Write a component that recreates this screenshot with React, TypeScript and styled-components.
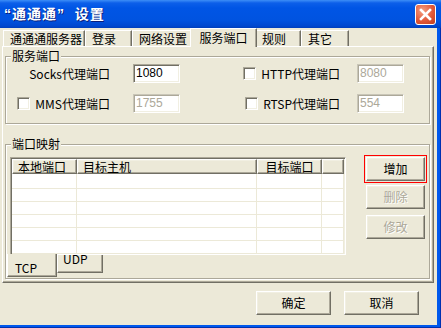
import styled, { createGlobalStyle, css } from "styled-components";

const GlobalStyle = createGlobalStyle`
  * { box-sizing: border-box; }
  html, body { margin: 0; padding: 0; }
  body {
    background: #ece9d8;
    font-family: "Noto Sans CJK SC", "Liberation Sans", sans-serif;
    font-size: 12px;
    line-height: 12px;
    color: #000;
  }
`;

const raised = css`
  border: 1px solid;
  border-color: #fff #716f64 #716f64 #fff;
  box-shadow: inset -1px -1px #aca899, inset 1px 1px #f1efe2;
`;

const sunken = css`
  border: 1px solid;
  border-color: #aca899 #fff #fff #aca899;
  box-shadow: inset 1px 1px #716f64, inset -1px -1px #f1efe2;
`;

const Window = styled.div`
  width: 441px;
  height: 328px;
  display: flex;
  flex-direction: column;
`;

const TitleBar = styled.div`
  height: 28px;
  flex: none;
  display: flex;
  align-items: center;
  justify-content: space-between;
  padding: 0 5px 0 4px;
  background: linear-gradient(
    180deg,
    #3d8ef7 0,
    #0c5fe9 3px,
    #0055e5 8px,
    #0053e0 20px,
    #0048cf 26px,
    #003fbb 28px
  );
`;

const Title = styled.span`
  color: #fff;
  font-family: "Liberation Sans", "Noto Sans CJK SC", sans-serif;
  font-weight: bold;
  font-size: 14px;
  line-height: 14px;
  letter-spacing: 1px;
  text-shadow: 1px 1px #0a1e7a;
  margin-top: -1px;
  white-space: pre;
`;

const CloseButton = styled.div`
  width: 21px;
  height: 21px;
  border: 1px solid #fff;
  border-radius: 3px;
  background: radial-gradient(circle at 35% 30%, #f49f82, #e2593a 55%, #c13d1c);
  display: flex;
  align-items: center;
  justify-content: center;
`;

const Frame = styled.div`
  flex: 1;
  display: flex;
  padding: 0 4px 3px 0;
  background: #0058ec;
  box-shadow: inset -1px -1px #0030b0;
`;

const Client = styled.div`
  flex: 1;
  display: flex;
  flex-direction: column;
  padding: 0 3px 0 2px;
  background: #ece9d8;
`;

const TabRow = styled.div`
  height: 18px;
  flex: none;
  display: flex;
  align-items: flex-end;
  padding-left: 1px;
  position: relative;
  z-index: 1;
`;

const Tab = styled.div<{ $active?: boolean; $w: number }>`
  width: ${(p) => p.$w}px;
  height: ${(p) => (p.$active ? 19 : 16)}px;
  margin: ${(p) => (p.$active ? "0 -2px -1px" : "0")};
  padding: ${(p) => (p.$active ? "3px 0 0" : "2px 0 0 6px")};
  text-align: ${(p) => (p.$active ? "center" : "left")};
  background: #ece9d8;
  border: 1px solid;
  border-bottom: none;
  border-color: #fff #716f64 transparent #fff;
  box-shadow: inset -1px 0 #aca899;
  position: relative;
  z-index: ${(p) => (p.$active ? 2 : 1)};
  white-space: nowrap;
`;

const Panel = styled.div`
  height: 237px;
  flex: none;
  display: flex;
  flex-direction: column;
  padding: 0 3px 0 2px;
  border: 1px solid;
  border-color: #fff #716f64 #716f64 #fff;
  box-shadow: inset -1px -1px #aca899;
`;

const Group = styled.div<{ $mt: number; $pb: number }>`
  margin-top: ${(p) => p.$mt}px;
  padding-bottom: ${(p) => p.$pb}px;
  border: 1px solid #aca899;
  box-shadow: inset 1px 1px #fff, 1px 1px #fff;
  display: flex;
  flex-direction: column;
`;

const Legend = styled.div`
  align-self: flex-start;
  margin: -7px 0 0 5px;
  padding: 0 1px;
  line-height: 12px;
  background: #ece9d8;
  position: relative;
`;

const FieldRow = styled.div<{ $mt: number }>`
  display: flex;
  align-items: center;
  height: 19px;
  margin-top: ${(p) => p.$mt}px;
`;

const LabelCell = styled.div<{ $w: number; $pr: number }>`
  width: ${(p) => p.$w}px;
  padding-right: ${(p) => p.$pr}px;
  display: flex;
  align-items: center;
  justify-content: flex-end;
  white-space: nowrap;
`;

const CheckBox = styled.div`
  width: 13px;
  height: 13px;
  margin-right: 5px;
  background: #fff;
  ${sunken};
`;

const TextBox = styled.div<{ $disabled?: boolean }>`
  width: 47px;
  height: 19px;
  padding: 0 0 0 2px;
  background: #fff;
  ${sunken};
  border-color: ${(p) =>
    p.$disabled ? "#c9c6b8 #fff #fff #c9c6b8" : "#aca899 #fff #fff #aca899"};
  box-shadow: inset 1px 1px ${(p) => (p.$disabled ? "#aca899" : "#716f64")},
    inset -1px -1px #f1efe2;
  color: ${(p) => (p.$disabled ? "#aca899" : "#000")};
  font-family: "Liberation Sans", sans-serif;
  font-size: 12px;
  line-height: 17px;
`;

const MapBody = styled.div`
  display: flex;
  align-items: flex-start;
  padding-left: 4px;
`;

const ListColumn = styled.div`
  width: 336px;
  margin-top: 7px;
  display: flex;
  flex-direction: column;
`;

const ListView = styled.div`
  height: 98px;
  display: flex;
  flex-direction: column;
  overflow: hidden;
  background: #fff;
  border: 1px solid;
  border-color: #aca899 #fff #fff #aca899;
  box-shadow: inset 1px 1px #716f64, inset -1px -1px #f1efe2;
  padding: 1px;
`;

const HeaderRow = styled.div`
  display: flex;
  height: 15px;
  flex: none;
`;

const HeaderCell = styled.div<{ $w?: number; $center?: boolean }>`
  ${(p) => (p.$w ? `width: ${p.$w}px; flex: none;` : "flex: 1;")}
  ${raised};
  background: #ece9d8;
  padding-left: ${(p) => (p.$center ? 0 : 5)}px;
  text-align: ${(p) => (p.$center ? "center" : "left")};
  line-height: 13px;
  white-space: nowrap;
`;

const Row = styled.div<{ $h: number }>`
  display: flex;
  height: ${(p) => p.$h}px;
  flex: none;
`;

const Cell = styled.div<{ $w?: number }>`
  ${(p) => (p.$w ? `width: ${p.$w}px; flex: none;` : "flex: 1;")}
  border-right: 1px solid #ece9d8;
  border-bottom: 1px solid #ece9d8;
`;

const TabStrip = styled.div`
  display: flex;
  align-items: flex-start;
  margin-left: -3px;
`;

const BottomTab = styled.div<{ $active?: boolean }>`
  width: ${(p) => (p.$active ? 50 : 46)}px;
  height: ${(p) => (p.$active ? 23 : 18)}px;
  margin-top: ${(p) => (p.$active ? -1 : 0)}px;
  padding: ${(p) => (p.$active ? "8px 0 0 7px" : "0 0 0 5px")};
  line-height: ${(p) => (p.$active ? 12 : 8)}px;
  background: #ece9d8;
  border: 1px solid;
  border-top: none;
  border-color: transparent #716f64 #716f64 #fff;
  box-shadow: inset -1px -1px #aca899;
  position: relative;
  z-index: ${(p) => (p.$active ? 2 : 1)};
`;

const ButtonColumn = styled.div`
  display: flex;
  flex-direction: column;
  align-items: flex-start;
  margin: 5px 0 0 18px;
`;

const FocusRing = styled.div`
  border: 1px solid #ff0000;
  padding: 1px;
`;

const Button = styled.div<{ $w: number; $disabled?: boolean; $mt?: number; $ml?: number }>`
  width: ${(p) => p.$w}px;
  height: 24px;
  margin: ${(p) => p.$mt ?? 0}px 0 0 ${(p) => p.$ml ?? 0}px;
  display: flex;
  align-items: center;
  justify-content: center;
  background: #ece9d8;
  ${raised};
  color: ${(p) => (p.$disabled ? "#aca899" : "#000")};
  text-shadow: ${(p) => (p.$disabled ? "1px 1px #fff" : "none")};
`;

const ButtonBar = styled.div`
  display: flex;
  justify-content: flex-end;
  gap: 13px;
  margin-top: 8px;
  padding-right: 15px;
`;

const columns = [65, 180, 65, 0];
const rowHeights = [15, 13, 13, 13, 13, 13, 13];

const tabs = [
  { label: "通通通服务器", w: 82 },
  { label: "登录", w: 47 },
  { label: "网络设置", w: 60 },
  { label: "服务端口", w: 67, active: true },
  { label: "规则", w: 46 },
  { label: "其它", w: 48 },
];

export default function App() {
  return (
    <>
      <GlobalStyle />
      <Window>
        <TitleBar>
          <Title>“通通通”  设置</Title>
          <CloseButton>
            <svg width="13" height="13" viewBox="0 0 13 13">
              <path d="M2 2 L11 11 M11 2 L2 11" stroke="#fff" strokeWidth="2.6" strokeLinecap="square" />
            </svg>
          </CloseButton>
        </TitleBar>
        <Frame>
          <Client>
            <TabRow>
              {tabs.map((t) => (
                <Tab key={t.label} $w={t.w} $active={t.active}>
                  {t.label}
                </Tab>
              ))}
            </TabRow>
            <Panel>
              <Group $mt={9} $pb={10}>
                <Legend>服务端口</Legend>
                <FieldRow $mt={2}>
                  <LabelCell $w={127} $pr={23}>Socks代理端口</LabelCell>
                  <TextBox>1080</TextBox>
                  <LabelCell $w={177} $pr={17}>
                    <CheckBox />
                    HTTP代理端口
                  </LabelCell>
                  <TextBox $disabled>8080</TextBox>
                </FieldRow>
                <FieldRow $mt={11}>
                  <LabelCell $w={127} $pr={23}>
                    <CheckBox />
                    MMS代理端口
                  </LabelCell>
                  <TextBox $disabled>1755</TextBox>
                  <LabelCell $w={177} $pr={17}>
                    <CheckBox />
                    RTSP代理端口
                  </LabelCell>
                  <TextBox $disabled>554</TextBox>
                </FieldRow>
              </Group>
              <Group $mt={20} $pb={1}>
                <Legend>端口映射</Legend>
                <MapBody>
                  <ListColumn>
                    <ListView>
                      <HeaderRow>
                        <HeaderCell $w={65}>本地端口</HeaderCell>
                        <HeaderCell $w={180}>目标主机</HeaderCell>
                        <HeaderCell $w={65} $center>目标端口</HeaderCell>
                        <HeaderCell />
                      </HeaderRow>
                      {rowHeights.map((h, i) => (
                        <Row key={i} $h={h}>
                          {columns.map((w, j) => (
                            <Cell key={j} $w={w || undefined} />
                          ))}
                        </Row>
                      ))}
                    </ListView>
                    <TabStrip>
                      <BottomTab $active>TCP</BottomTab>
                      <BottomTab>UDP</BottomTab>
                    </TabStrip>
                  </ListColumn>
                  <ButtonColumn>
                    <FocusRing>
                      <Button $w={59}>增加</Button>
                    </FocusRing>
                    <Button $w={59} $ml={2} $mt={2} $disabled>
                      删除
                    </Button>
                    <Button $w={59} $ml={2} $mt={6} $disabled>
                      修改
                    </Button>
                  </ButtonColumn>
                </MapBody>
              </Group>
            </Panel>
            <ButtonBar>
              <Button $w={75}>确定</Button>
              <Button $w={75}>取消</Button>
            </ButtonBar>
          </Client>
        </Frame>
      </Window>
    </>
  );
}
